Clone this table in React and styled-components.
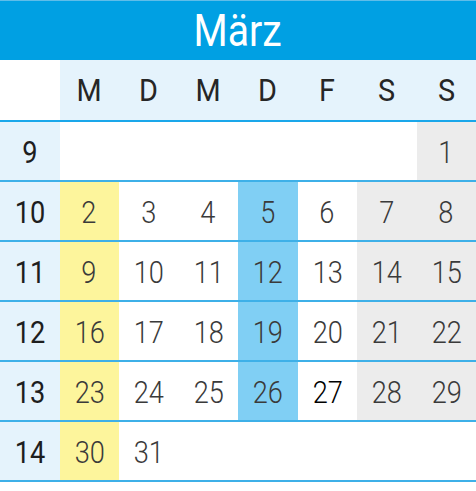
import React from 'react';
import styled, { createGlobalStyle } from 'styled-components';

const GlobalStyle = createGlobalStyle`
  body {
    margin: 0;
    background: #ffffff;
    font-family: Roboto, "Liberation Sans", sans-serif;
  }
`;

const Calendar = styled.div`
  width: 476px;
  background: #ffffff;
`;

const Title = styled.div`
  height: 60px;
  box-sizing: border-box;
  border-top: 1px solid #5fbde9;
  background: #00a0e3;
  color: #ffffff;
  display: flex;
  align-items: center;
  justify-content: center;
  font-size: 45px;
  font-weight: 400;
`;

const Squeeze = styled.span`
  display: inline-block;
  transform: scaleX(${p => p.$x || 0.85});
`;

const Row = styled.div`
  display: grid;
  grid-template-columns: repeat(8, 1fr);
  height: ${p => (p.$head ? '60px' : '58px')};
  border-top: ${p => (p.$head ? 'none' : '2px solid #3eb0e8')};
  border-bottom: ${p => (p.$last ? '2px solid #3eb0e8' : 'none')};
`;

const HeadRow = styled(Row)`
  & + div {
    border-top-color: #1aa7ea;
  }
`;

const bgFor = {
  mon: '#fdf59c',
  thu: '#80cff4',
  weekend: '#ececec',
  week: '#e5f3fc',
  head: '#e5f3fc',
  plain: '#ffffff',
};

const Cell = styled.div`
  display: flex;
  align-items: center;
  justify-content: center;
  background: ${p => bgFor[p.$kind] || '#ffffff'};
  font-size: 32px;
  line-height: 1;
  color: ${p => (p.$today ? '#000000' : '#3a3a3a')};
  font-weight: 300;
  padding-top: 2px;
`;

const WeekCell = styled(Cell)`
  color: #1e1e1e;
  font-weight: 400;
`;

const HeadCell = styled(Cell)`
  color: #262626;
  font-weight: 400;
  padding-top: 0;
`;

const dayNames = ['M', 'D', 'M', 'D', 'F', 'S', 'S'];

const weeks = [
  { nr: 9, days: [null, null, null, null, null, null, 1] },
  { nr: 10, days: [2, 3, 4, 5, 6, 7, 8] },
  { nr: 11, days: [9, 10, 11, 12, 13, 14, 15] },
  { nr: 12, days: [16, 17, 18, 19, 20, 21, 22] },
  { nr: 13, days: [23, 24, 25, 26, 27, 28, 29] },
  { nr: 14, days: [30, 31, null, null, null, null, null] },
];

function kindOf(col, day) {
  if (day == null) return 'plain';
  if (col === 0) return 'mon';
  if (col === 3) return 'thu';
  if (col >= 5) return 'weekend';
  return 'plain';
}

export default function App() {
  return (
    <>
      <GlobalStyle />
      <Calendar>
        <Title>
          <Squeeze $x={0.87}>März</Squeeze>
        </Title>
        <HeadRow $head>
          <HeadCell $kind="plain" />
          {dayNames.map((d, i) => (
            <HeadCell key={i} $kind="head">
              <Squeeze $x={0.9}>{d}</Squeeze>
            </HeadCell>
          ))}
        </HeadRow>
        {weeks.map((w, wi) => (
          <Row key={w.nr} $last={wi === weeks.length - 1}>
            <WeekCell $kind="week">
              <Squeeze>{w.nr}</Squeeze>
            </WeekCell>
            {w.days.map((day, i) => (
              <Cell key={i} $kind={kindOf(i, day)} $today={day === 27}>
                {day != null && <Squeeze>{day}</Squeeze>}
              </Cell>
            ))}
          </Row>
        ))}
      </Calendar>
    </>
  );
}
